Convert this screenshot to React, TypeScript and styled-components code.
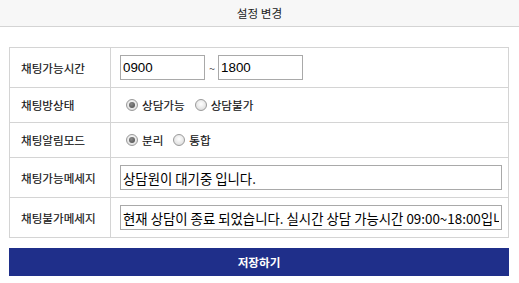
import React from "react";
import styled, { createGlobalStyle } from "styled-components";

const Global = createGlobalStyle`
  html, body { margin: 0; padding: 0; background: #fff; }
  body { font-family: "Noto Sans CJK KR", "Liberation Sans", sans-serif; color: #333; }
  * { box-sizing: border-box; }
`;

const Header = styled.div`
  height: 27px;
  background: #f7f7f7;
  border-bottom: 1px solid #d4d4d4;
  display: flex;
  align-items: center;
  justify-content: center;
  font-size: 11.6px;
  color: #222;
  padding-bottom: 1px;
`;

const Body = styled.div`
  padding: 20px 10px 0 9px;
`;

const Table = styled.div`
  width: 500px;
  border: 1px solid #d4d4d4;
  border-bottom: none;
`;

const Row = styled.div<{ $h: number }>`
  display: grid;
  grid-template-columns: 101px 1fr;
  height: ${(p) => p.$h}px;
  border-bottom: 1px solid #d4d4d4;
`;

const Label = styled.div`
  display: flex;
  align-items: center;
  padding-left: 11px;
  border-right: 1px solid #d4d4d4;
  font-size: 11.6px;
  color: #111;
  -webkit-text-stroke: 0.15px #111;
`;

const Value = styled.div`
  display: flex;
  align-items: center;
  padding-left: 9px;
  padding-right: 6px;
  font-size: 11.6px;
  color: #111;
`;

const TimeInput = styled.input`
  width: 85px;
  height: 25px;
  border: 1px solid #a9a9a9;
  padding: 0 2px;
  font-family: "Liberation Sans", sans-serif;
  font-size: 13.33px;
  color: #000;
  outline: none;
`;

const Tilde = styled.span`
  margin: 0 3px 0 4px;
  font-size: 11px;
  color: #555;
`;

const TextInput = styled.input`
  width: 100%;
  height: 25px;
  border: 1px solid #a9a9a9;
  padding: 0 2px;
  font-family: "Noto Sans CJK KR", sans-serif;
  font-size: 13.4px;
  color: #000;
  outline: none;
`;

const RadioGroup = styled.label`
  display: flex;
  align-items: center;
  margin-right: 4px;
  padding-left: 6px;
  -webkit-text-stroke: 0.15px #111;
`;

const Circle = styled.span<{ $on?: boolean }>`
  width: 12px;
  height: 12px;
  border-radius: 50%;
  border: 1px solid #9a9a9a;
  background: radial-gradient(circle at 50% 40%, #ffffff 0%, #e6e6e6 60%, #d0d0d0 100%);
  display: flex;
  align-items: center;
  justify-content: center;
  margin-right: 4px;
  &::after {
    content: "";
    width: 6px;
    height: 6px;
    border-radius: 50%;
    background: ${(p) => (p.$on ? "radial-gradient(circle at 40% 35%, #8a8a8a, #4a4a4a)" : "transparent")};
  }
`;

const SaveButton = styled.button`
  display: block;
  width: 500px;
  height: 28px;
  margin-top: 10px;
  border: none;
  background: #1f2f8a;
  color: #fff;
  font-family: "Noto Sans CJK KR", sans-serif;
  font-size: 11.6px;
  font-weight: bold;
  padding: 0 0 1px;
`;

const Radio = ({ on, children }: { on?: boolean; children: React.ReactNode }) => (
  <RadioGroup>
    <Circle $on={on} />
    {children}
  </RadioGroup>
);

export default function App() {
  return (
    <>
      <Global />
      <Header>설정 변경</Header>
      <Body>
        <Table>
          <Row $h={40}>
            <Label>채팅가능시간</Label>
            <Value>
              <TimeInput defaultValue="0900" />
              <Tilde>~</Tilde>
              <TimeInput defaultValue="1800" />
            </Value>
          </Row>
          <Row $h={35}>
            <Label>채팅방상태</Label>
            <Value>
              <Radio on>상담가능</Radio>
              <Radio>상담불가</Radio>
            </Value>
          </Row>
          <Row $h={35}>
            <Label>채팅알림모드</Label>
            <Value>
              <Radio on>분리</Radio>
              <Radio>통합</Radio>
            </Value>
          </Row>
          <Row $h={40}>
            <Label>채팅가능메세지</Label>
            <Value>
              <TextInput defaultValue="상담원이 대기중 입니다." />
            </Value>
          </Row>
          <Row $h={40}>
            <Label>채팅불가메세지</Label>
            <Value>
              <TextInput defaultValue="현재 상담이 종료 되었습니다. 실시간 상담 가능시간 09:00~18:00입니다." />
            </Value>
          </Row>
        </Table>
        <SaveButton>저장하기</SaveButton>
      </Body>
    </>
  );
}
